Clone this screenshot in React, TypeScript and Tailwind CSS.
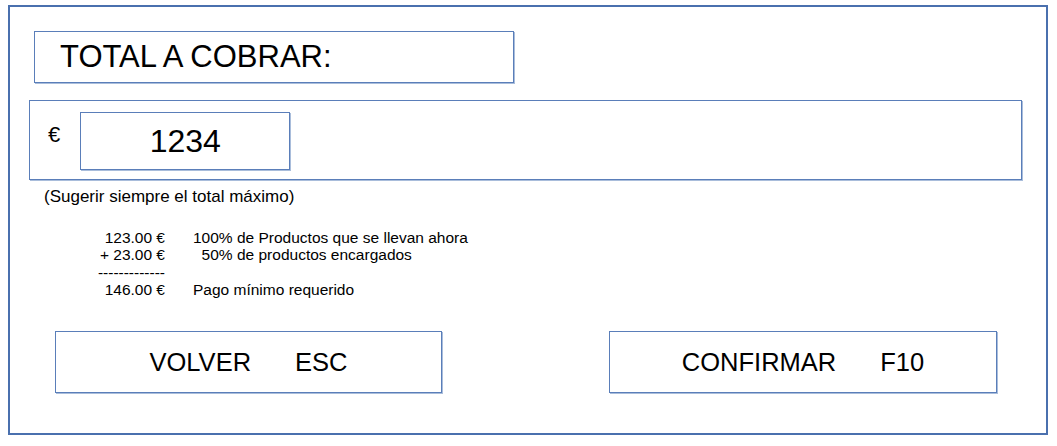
const font = { fontFamily: '"Liberation Sans", Arial, sans-serif' };

const box = "border border-[#5a7eb9] shadow-[1px_1px_0_#a9bddb]";

function Line({ amount, label }: { amount: string; label: string }) {
  return (
    <div className="flex h-[17.3px] items-center">
      <span className="w-[80px] text-right whitespace-pre">{amount}</span>
      <span className="ml-[28px] whitespace-pre">{label}</span>
    </div>
  );
}

function App() {
  return (
    <div className="w-[1057px] h-[446px] bg-white pl-[8px] pt-[5px] text-black" style={font}>
      <div className="w-[1040px] h-[430px] border-2 border-[#4a70ae] flex flex-col">
        <div className={`${box} ml-[24px] mt-[24px] w-[480px] h-[52px] flex items-center pl-[25px] text-[31px]`}>
          TOTAL A COBRAR:
        </div>

        <div className={`${box} ml-[19px] mt-[17px] w-[993px] h-[80px] flex items-start`}>
          <span className="ml-[18px] mt-[23px] text-[22px] leading-none">€</span>
          <div className={`${box} ml-[20px] mt-[11px] w-[210px] h-[58px] flex items-center justify-center text-[32px]`}>
            1234
          </div>
        </div>

        <div className="ml-[34px] mt-[7px] text-[17px] leading-[20px]">(Sugerir siempre el total máximo)</div>

        <div className="ml-[75px] mt-[22px] text-[15.5px] leading-[17px]">
          <Line amount="123.00 €" label="100% de Productos que se llevan ahora" />
          <Line amount="+ 23.00 €" label="  50% de productos encargados" />
          <Line amount="-------------" label="" />
          <Line amount="146.00 €" label="Pago mínimo requerido" />
        </div>

        <div className="ml-[45px] mt-[33px] flex gap-[167px]">
          <div className={`${box} w-[387px] h-[62px] flex items-center justify-center gap-[44px] text-[25.5px]`}>
            <span>VOLVER</span>
            <span>ESC</span>
          </div>
          <div className={`${box} w-[388px] h-[62px] flex items-center justify-center gap-[44px] text-[25.5px]`}>
            <span>CONFIRMAR</span>
            <span>F10</span>
          </div>
        </div>
      </div>
    </div>
  );
}

export default App;
